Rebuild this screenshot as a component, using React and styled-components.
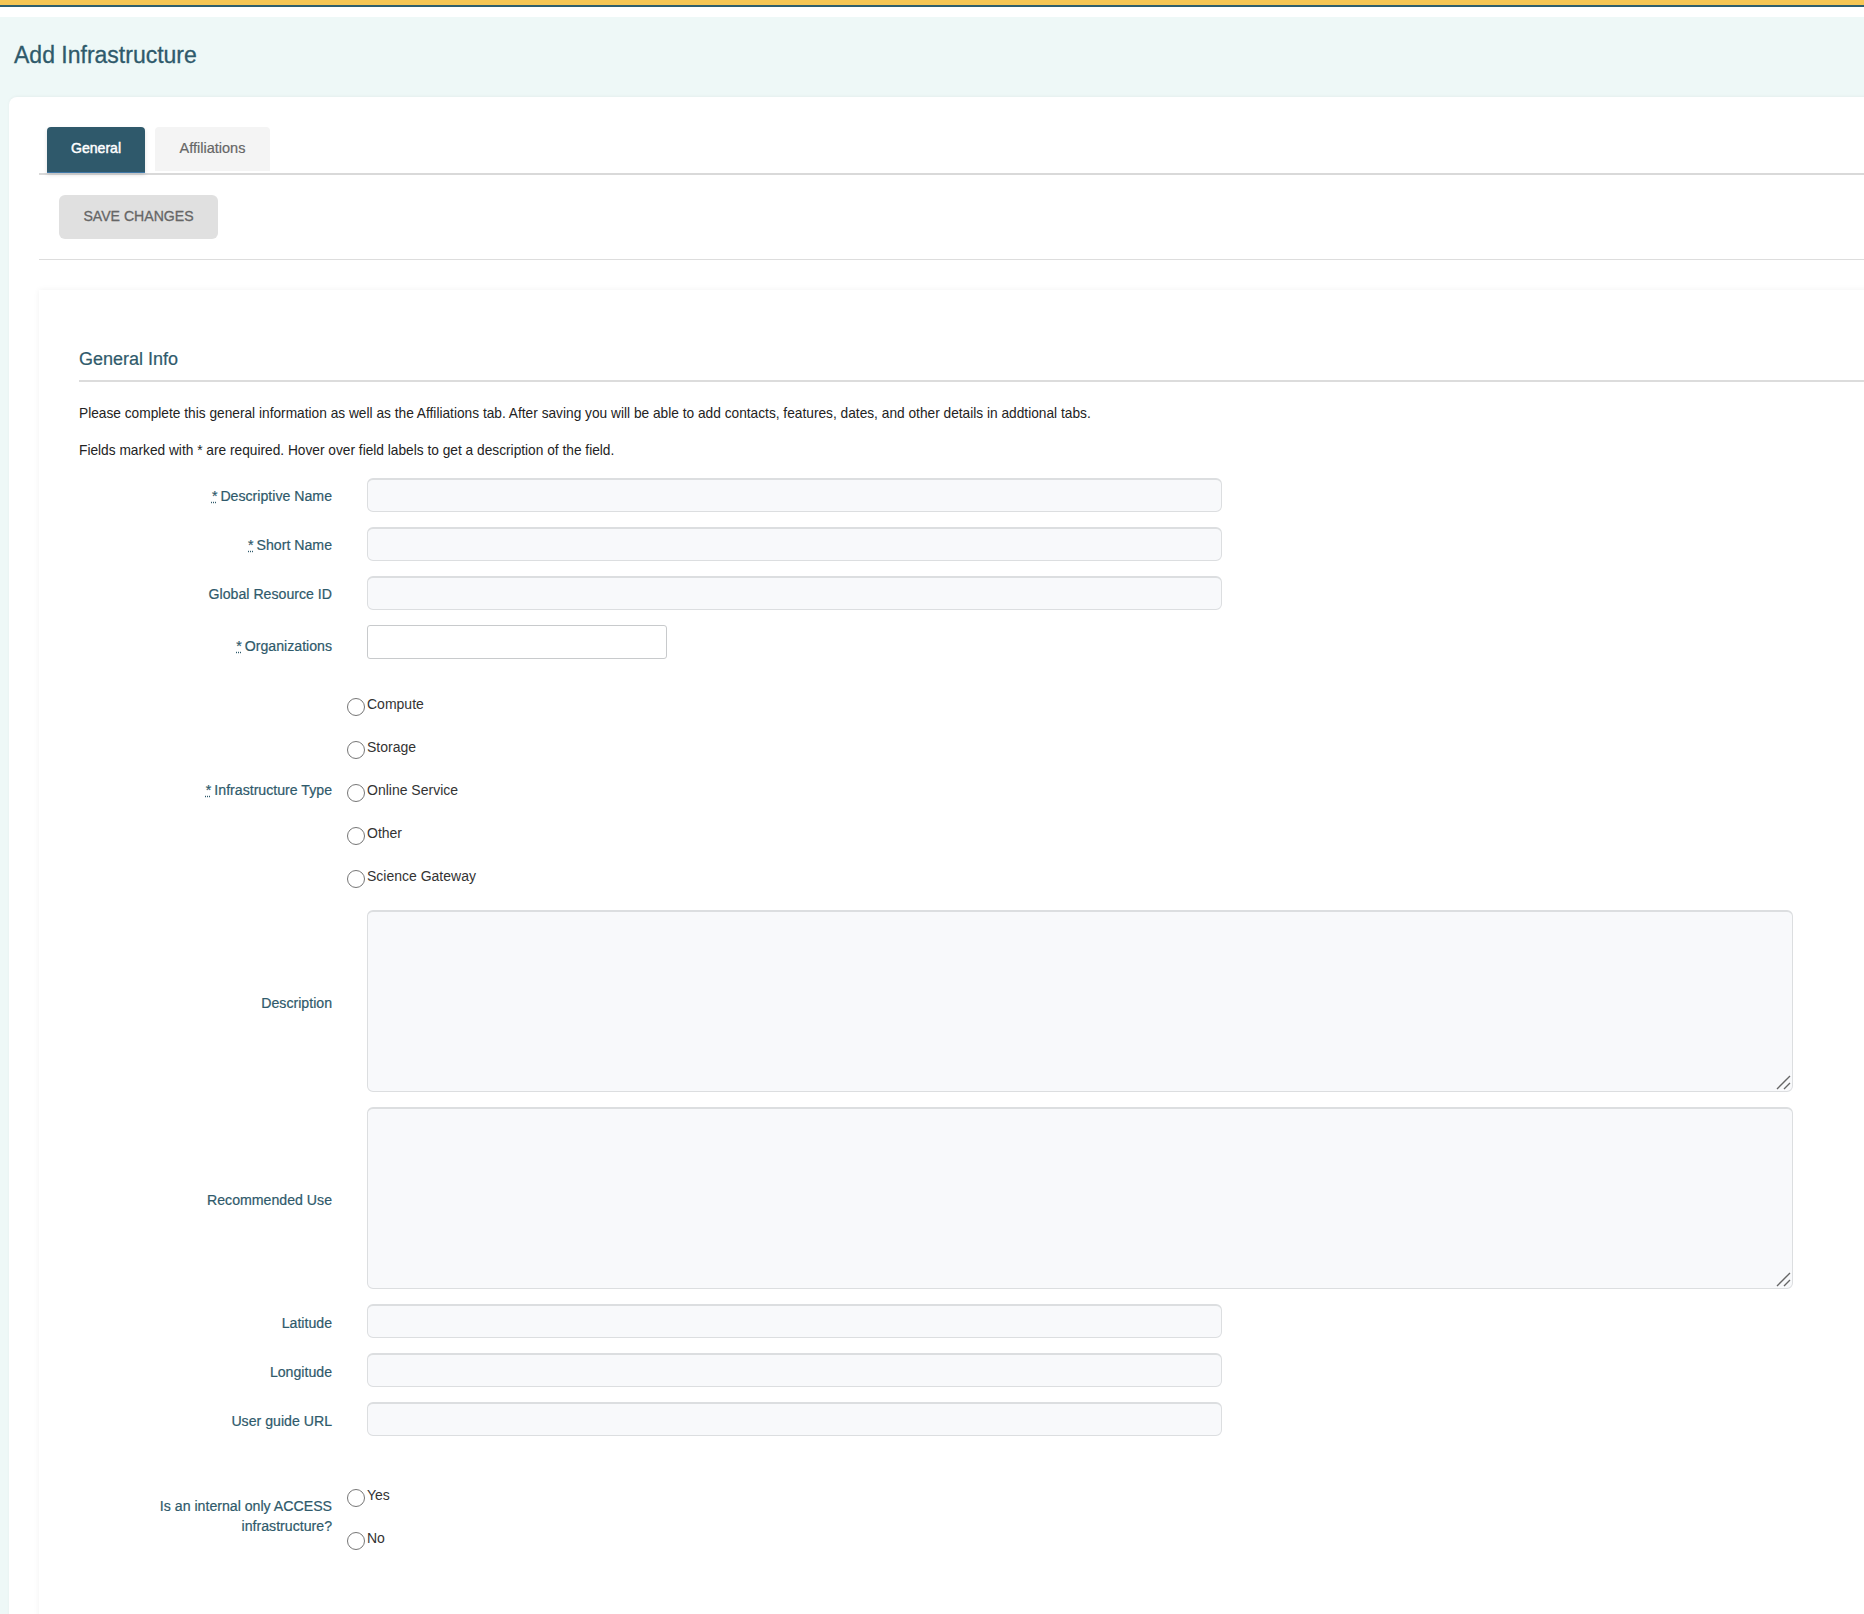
import styled, { createGlobalStyle } from "styled-components";

const GlobalStyle = createGlobalStyle`
	html, body {
		margin: 0;
		padding: 0;
		background: #fff;
	}
	* {
		box-sizing: border-box;
	}
`;

const Page = styled.div`
	height: 100vh;
	overflow: hidden;
	font-family: "Liberation Sans", Arial, sans-serif;
	font-size: 14px;
	color: #232323;
`;

const TopBar = styled.div`
	height: 7px;
	margin-bottom: 10px;
	background: #f6c654;
	border-bottom: 2px solid #2f5f6e;
`;

const Main = styled.div`
	background: #eef8f7;
	padding-left: 9px;
	min-height: 100%;
`;

const PageTitle = styled.h1`
	margin: 0;
	height: 80px;
	padding-left: 5px;
	font-size: 23px;
	font-weight: 400;
	line-height: 77px;
	color: #2f5a6b;
	-webkit-text-stroke: 0.3px #2f5a6b;
`;

const Card = styled.div`
	margin-right: -20px;
	padding: 30px 0 0 30px;
	background: #fff;
	border-radius: 8px 0 0 0;
	box-shadow: 0 -1px 3px rgb(0 0 0 / 4%);
	height: 1600px;
`;

const TabBar = styled.div`
	display: flex;
	align-items: flex-start;
	gap: 10px;
	height: 48px;
	padding-left: 8px;
	border-bottom: 2px solid #d9d9d9;
`;

const Tab = styled.div`
	display: flex;
	justify-content: center;
	width: ${(p) => (p.$active ? "98px" : "115px")};
	height: ${(p) => (p.$active ? "46px" : "44px")};
	padding-top: 13px;
	line-height: 16px;
	font-size: ${(p) => (p.$active ? "14.1px" : "14.5px")};
	color: ${(p) => (p.$active ? "#fff" : "#666")};
	-webkit-text-stroke: ${(p) => (p.$active ? "0.45px #fff" : "0.2px #666")};
	background: ${(p) => (p.$active ? "#2f596b" : "#f4f4f4")};
	border-radius: 4px 4px 0 0;
	border-bottom: ${(p) => (p.$active ? "1px solid #3f78a8" : "none")};
	box-shadow: ${(p) => (p.$active ? "0 2px 4px rgb(0 0 0 / 12%)" : "none")};
`;

const Toolbar = styled.div`
	padding: 20px;
	border-bottom: 1.5px solid #ddd;
`;

const SaveButton = styled.button`
	display: block;
	width: 159px;
	height: 44px;
	padding: 0 0 2px;
	border: none;
	border-radius: 6px;
	background: #e0e0e0;
	color: #666;
	font-family: inherit;
	font-size: 14.1px;
	font-weight: 400;
	-webkit-text-stroke: 0.3px #666;
`;

const Panel = styled.section`
	margin: 30px -20px 0 0;
	padding: 56px 0 0 40px;
	background: #fff;
	box-shadow: 0 0 6px rgb(0 0 0 / 6%);
	height: 1400px;
`;

const SectionTitle = styled.h2`
	margin: 0;
	padding: 1px 0 9px;
	border-bottom: 2px solid #dcdcdc;
	font-size: 18px;
	font-weight: 400;
	line-height: 24px;
	color: #2f5a6b;
	-webkit-text-stroke: 0.2px #2f5a6b;
`;

const Note = styled.p`
	margin: ${(p) => (p.$first ? "22px" : "17px")} 0 0;
	font-size: 13.72px;
	line-height: 20px;
`;

const Form = styled.div`
	display: grid;
	grid-template-columns: 253px 1fr;
	column-gap: 35px;
	row-gap: 15px;
	margin-top: 16.5px;
`;

const FieldLabel = styled.label`
	align-self: center;
	margin-top: ${(p) => p.$offset || "3px"};
	text-align: right;
	font-size: 14.15px;
	line-height: 20px;
	color: #2f5a6b;
	-webkit-text-stroke: 0.2px #2f5a6b;
`;

const Req = styled.abbr`
	margin-right: 3px;
	text-decoration: underline dotted;
`;

const Input = styled.input`
	display: block;
	width: ${(p) => (p.$plain ? "300px" : "855px")};
	height: 34px;
	border: 1px solid ${(p) => (p.$plain ? "#c8cacc" : "#dcdee0")};
	border-top-width: ${(p) => (p.$plain ? "1px" : "2px")};
	border-radius: ${(p) => (p.$plain ? "3px" : "6px")};
	background: ${(p) => (p.$plain ? "#fff" : "#f8f9fb")};
`;

const TextAreaWrap = styled.div`
	position: relative;
	width: 1426px;
	height: 182px;
`;

const TextArea = styled.textarea`
	display: block;
	width: 100%;
	height: 100%;
	resize: none;
	border: 1px solid #dcdee0;
	border-top-width: 2px;
	border-radius: 6px;
	background: #f8f9fb;
`;

const ResizeGrip = styled.svg`
	position: absolute;
	right: 2px;
	bottom: 2px;
	width: 15px;
	height: 15px;
	pointer-events: none;
`;

const RadioGroup = styled.div`
	padding-top: 6px;
	margin-top: ${(p) => p.$top || "0"};
`;

const RadioItem = styled.label`
	display: flex;
	align-items: flex-start;
	height: 43px;
	padding-top: 14px;
	line-height: 20px;
	color: #333;
`;

const Radio = styled.input.attrs({ type: "radio" })`
	appearance: none;
	flex: none;
	width: 18px;
	height: 18px;
	margin: 4px 2px 0 -20px;
	border: 1px solid #767676;
	border-radius: 50%;
	background: #fff;
`;

const Required = () => <Req title="required">*</Req>;

const BigText = () => (
	<TextAreaWrap>
		<TextArea />
		<ResizeGrip viewBox="0 0 15 15">
			<path d="M1 14 L14 1 M8 14 L14 8" stroke="#666" strokeWidth="1.4" fill="none" />
		</ResizeGrip>
	</TextAreaWrap>
);

const types = ["Compute", "Storage", "Online Service", "Other", "Science Gateway"];

export default function App() {
	return (
		<Page>
			<GlobalStyle />
			<TopBar />
			<Main>
				<PageTitle>Add Infrastructure</PageTitle>
				<Card>
					<TabBar>
						<Tab $active>General</Tab>
						<Tab>Affiliations</Tab>
					</TabBar>
					<Toolbar>
						<SaveButton>SAVE CHANGES</SaveButton>
					</Toolbar>
					<Panel>
						<SectionTitle>General Info</SectionTitle>
						<Note $first>
							Please complete this general information as well as the Affiliations tab. After saving you
							will be able to add contacts, features, dates, and other details in addtional tabs.
						</Note>
						<Note>Fields marked with * are required. Hover over field labels to get a description of the field.</Note>
						<Form>
							<FieldLabel><Required />Descriptive Name</FieldLabel>
							<Input />
							<FieldLabel><Required />Short Name</FieldLabel>
							<Input />
							<FieldLabel>Global Resource ID</FieldLabel>
							<Input />
							<FieldLabel $offset="9px"><Required />Organizations</FieldLabel>
							<Input $plain />
							<FieldLabel $offset="12px"><Required />Infrastructure Type</FieldLabel>
							<RadioGroup>
								{types.map((t) => (
									<RadioItem key={t}>
										<Radio name="type" />
										{t}
									</RadioItem>
								))}
							</RadioGroup>
							<FieldLabel $offset="5px">Description</FieldLabel>
							<BigText />
							<FieldLabel $offset="5px">Recommended Use</FieldLabel>
							<BigText />
							<FieldLabel $offset="5px">Latitude</FieldLabel>
							<Input />
							<FieldLabel $offset="5px">Longitude</FieldLabel>
							<Input />
							<FieldLabel $offset="5px">User guide URL</FieldLabel>
							<Input />
							<FieldLabel $offset="25px">Is an internal only ACCESS infrastructure?</FieldLabel>
							<RadioGroup $top="14px">
								<RadioItem>
									<Radio name="internal" />
									Yes
								</RadioItem>
								<RadioItem>
									<Radio name="internal" />
									No
								</RadioItem>
							</RadioGroup>
						</Form>
					</Panel>
				</Card>
			</Main>
		</Page>
	);
}
